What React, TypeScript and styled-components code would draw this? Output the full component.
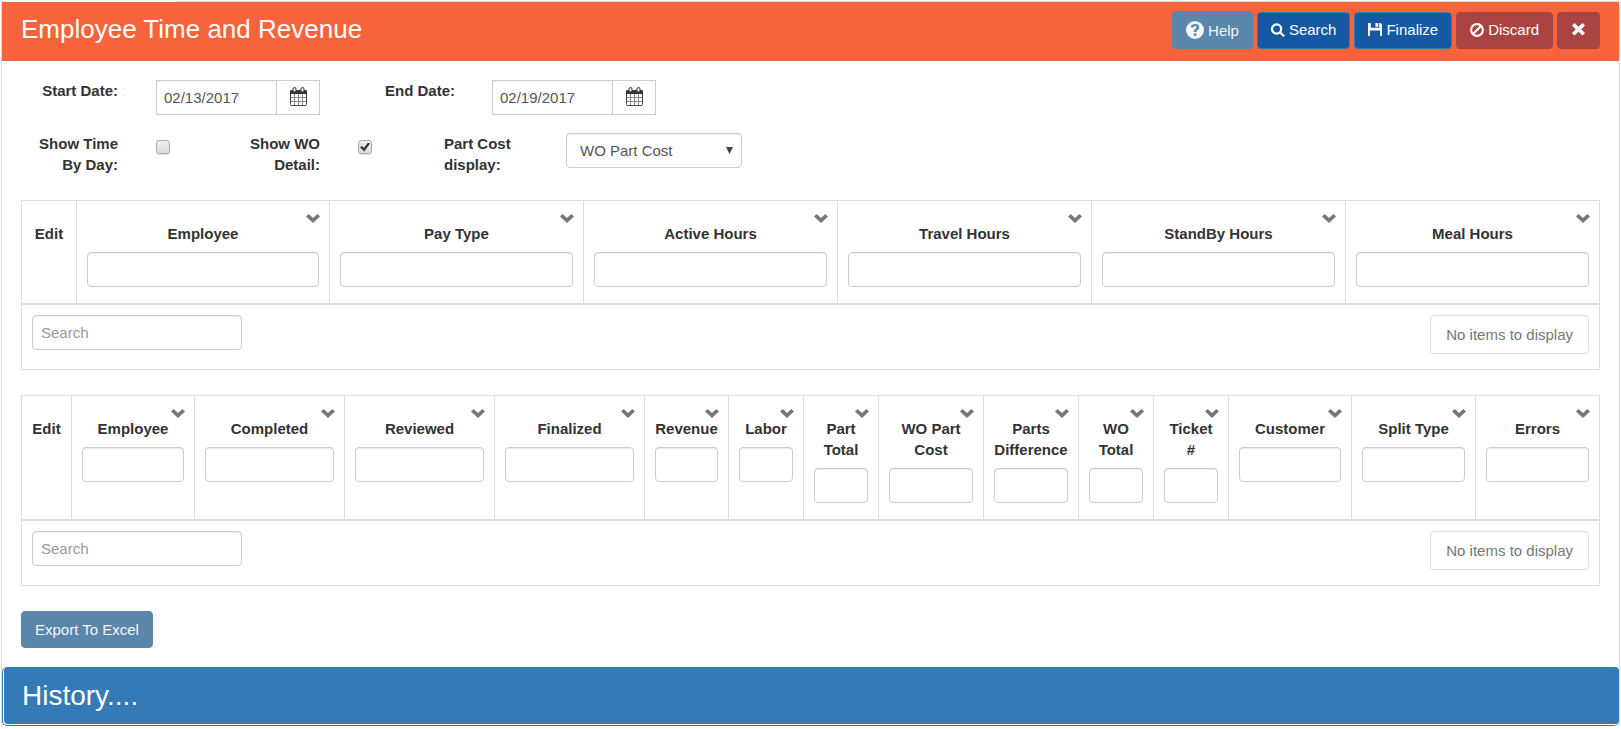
import React from "react";
import styled, { createGlobalStyle, css } from "styled-components";

const GlobalStyle = createGlobalStyle`
  *, *::before, *::after { box-sizing: border-box; }
  body {
    margin: 0;
    background: #fff;
    color: #333;
    font: 15px/21px "Liberation Sans", Arial, sans-serif;
  }
  button, input, select { font: inherit; color: inherit; }
`;

const LINE = "#ddd";

const Page = styled.div`
  padding: 1px 1px 0;
`;

const Panel = styled.main`
  position: relative;
  border: 1px solid ${LINE};
  border-bottom: 0;
  &::before {
    content: "";
    position: absolute;
    top: -1px;
    left: 3px;
    width: 172px;
    height: 1px;
    background: #fff;
  }
`;

const Header = styled.header`
  display: flex;
  justify-content: space-between;
  align-items: flex-start;
  padding: 9px 19px 12px;
  background: #f7633b;
  color: #fff;
`;

const Title = styled.h1`
  margin: 0;
  font-size: 26px;
  line-height: 36px;
  font-weight: 400;
`;

const Toolbar = styled.div`
  display: flex;
  align-items: flex-end;
  gap: 4px;
`;

type Tone = "steel" | "primary" | "danger";

const tones = {
  steel: css`background: #5b86ab; border-color: #5b86ab; color: #f4f6f8;`,
  primary: css`background: #1459a1; border-color: #2a7fae; color: #fff;`,
  danger: css`background: #a94442; border-color: #a94442; color: #fff;`,
};

const Button = styled.button<{ $tone: Tone; $tall?: boolean }>`
  display: inline-flex;
  align-items: center;
  gap: 4px;
  height: ${(p) => (p.$tall ? 38 : 37)}px;
  padding: 0 13px ${(p) => (p.$tone === "steel" ? 0 : 2)}px;
  border: 1px solid;
  border-radius: 4px;
  ${(p) => tones[p.$tone]}
`;

const Icon = styled.svg<{ $size?: number }>`
  display: block;
  flex: none;
  width: ${(p) => p.$size ?? 14}px;
  height: ${(p) => p.$size ?? 14}px;
  fill: currentColor;
`;

const Body = styled.div`
  padding: 19px;
`;

const FormRow = styled.div`
  display: flex;
  align-items: flex-start;
`;

const Field = styled.div<{ $width: number }>`
  display: flex;
  align-items: flex-start;
  width: ${(p) => p.$width}px;
`;

const Label = styled.label<{ $width: number; $gap: number; $left?: boolean }>`
  width: ${(p) => p.$width}px;
  margin-right: ${(p) => p.$gap}px;
  font-weight: 700;
  text-align: ${(p) => (p.$left ? "left" : "right")};
`;

const inputLook = css`
  height: 35px;
  border: 1px solid #ccc;
  background: #fff;
  color: #555;
  box-shadow: inset 0 1px 1px rgba(0, 0, 0, 0.075);
`;

const DateGroup = styled.div`
  display: flex;
`;

const DateInput = styled.input`
  ${inputLook}
  width: 121px;
  padding: 0 7px;
  border-radius: 0;
`;

const DateButton = styled.button`
  display: flex;
  align-items: center;
  justify-content: center;
  width: 44px;
  height: 35px;
  margin-left: -1px;
  padding: 0 0 2px;
  border: 1px solid #ccc;
  background: #fff;
`;

const Options = styled(FormRow)`
  padding-top: 18px;
  margin-bottom: 25px;
`;

const CheckBox = styled.input`
  appearance: none;
  display: grid;
  place-items: center;
  width: 14px;
  height: 14px;
  margin: 7px 0 0;
  border: 1px solid #aaa;
  border-radius: 3px;
  background: linear-gradient(#eee, #dcdcdc);
  box-shadow: 0 1px 1px rgba(0, 0, 0, 0.12);
  &:checked::after {
    content: "";
    width: 10px;
    height: 9px;
    background: #333;
    clip-path: polygon(0 52%, 20% 38%, 38% 62%, 82% 0, 100% 12%, 42% 100%);
  }
`;

const SelectWrap = styled.div`
  position: relative;
`;

const Select = styled.select`
  ${inputLook}
  appearance: none;
  display: block;
  width: 176px;
  padding: 0 13px;
  border-radius: 4px;
`;

const SelectArrow = styled.svg`
  position: absolute;
  right: 9px;
  top: 14px;
  width: 7px;
  height: 7px;
  fill: #444;
  pointer-events: none;
`;

const Grid = styled.section`
  margin-bottom: 25px;
`;

const GridTable = styled.table`
  width: 100%;
  table-layout: fixed;
  border-collapse: collapse;
`;

const HeadCell = styled.th`
  padding: 13px 10px 16px;
  border: 1px solid ${LINE};
  border-bottom: 2px solid ${LINE};
  vertical-align: top;
  font-weight: 700;
  text-align: center;
`;

const MenuButton = styled.button`
  display: block;
  width: 14px;
  height: 9px;
  margin: 0 -1px 0 auto;
  padding: 0;
  border: 0;
  background: none;
  color: #777;
`;

const Chevron = styled.svg`
  display: block;
  width: 14px;
  height: 9px;
  fill: currentColor;
`;

const HeadText = styled.div<{ $plain?: boolean }>`
  margin-top: ${(p) => (p.$plain ? 9 : 0)}px;
  white-space: nowrap;
`;

const FilterInput = styled.input`
  ${inputLook}
  display: block;
  width: 100%;
  margin-top: 8px;
  padding: 0 8px;
  border-radius: 4px;
`;

const GridFooter = styled.div`
  display: flex;
  justify-content: space-between;
  align-items: flex-start;
  padding: 10px 10px 15px;
  border: 1px solid ${LINE};
  border-top: 0;
`;

const SearchInput = styled.input`
  ${inputLook}
  width: 210px;
  padding: 0 8px;
  border-radius: 4px;
  &::placeholder { color: #999; opacity: 1; }
`;

const Empty = styled.div`
  padding: 8px 15px;
  border: 1px solid ${LINE};
  border-radius: 4px;
  color: #777;
`;

const History = styled.section`
  padding: 0 0 1px 1px;
  border: 1px solid #337ab7;
  border-top: 0;
  border-right: 0;
  border-radius: 5px;
`;

const HistoryTitle = styled.h2`
  margin: 0;
  padding: 13px 18px;
  border-radius: 4px;
  background: #337ab7;
  color: #fff;
  font-size: 28px;
  line-height: 31px;
  font-weight: 400;
`;

const CalendarIcon = () => (
  <Icon $size={19} viewBox="0 0 19 19" aria-hidden="true">
    <rect x="1.500" y="3.500" width="16" height="15" rx="1" fill="#fff" stroke="#444" />
    <path d="M1 3.500h17V7H1z" fill="#333" />
    <path d="M5.500 7v11M9.500 7v11M13.500 7v11M2 10.500h15M2 14.500h15" fill="none" stroke="#888" />
    <rect x="4" y="0.500" width="3" height="4.500" rx="1.500" fill="#eee" stroke="#333" />
    <rect x="12" y="0.500" width="3" height="4.500" rx="1.500" fill="#eee" stroke="#333" />
  </Icon>
);

const ChevronIcon = () => (
  <Chevron viewBox="0 0 14 9" aria-hidden="true">
    <path d="M0 2.600 2.700 0 7 4 11.300 0 14 2.600 7 9z" />
  </Chevron>
);

type Column = { name: string; lines: string[]; width: number; plain?: boolean };

const col = (name: string, width: number, lines = [name]): Column => ({ name, width, lines });
const edit = (width: number): Column => ({ name: "Edit", width, lines: ["Edit"], plain: true });

const hourColumns: Column[] = [
  edit(55),
  col("Employee", 253),
  col("Pay Type", 254),
  col("Active Hours", 254),
  col("Travel Hours", 254),
  col("StandBy Hours", 254),
  col("Meal Hours", 254),
];

const orderColumns: Column[] = [
  edit(50),
  col("Employee", 123),
  col("Completed", 150),
  col("Reviewed", 150),
  col("Finalized", 150),
  col("Revenue", 84),
  col("Labor", 75),
  col("Part Total", 75, ["Part", "Total"]),
  col("WO Part Cost", 105, ["WO Part", "Cost"]),
  col("Parts Difference", 95, ["Parts", "Difference"]),
  col("WO Total", 75, ["WO", "Total"]),
  col("Ticket #", 75, ["Ticket", "#"]),
  col("Customer", 123),
  col("Split Type", 124),
  col("Errors", 124),
];

const DataGrid = ({ title, columns }: { title: string; columns: Column[] }) => (
  <Grid aria-label={title}>
    <GridTable>
      <colgroup>
        {columns.map((c) => (
          <col key={c.name} width={c.width} />
        ))}
      </colgroup>
      <thead>
        <tr>
          {columns.map((c) => (
            <HeadCell key={c.name} scope="col">
              {!c.plain && (
                <MenuButton type="button" aria-label={`${c.name} menu`}>
                  <ChevronIcon />
                </MenuButton>
              )}
              {c.lines.map((line, i) => (
                <HeadText key={line} $plain={c.plain && i === 0}>
                  {line}
                </HeadText>
              ))}
              {!c.plain && <FilterInput type="text" aria-label={`Filter ${c.name}`} />}
            </HeadCell>
          ))}
        </tr>
      </thead>
    </GridTable>
    <GridFooter>
      <SearchInput type="text" placeholder="Search" aria-label={`Search ${title}`} />
      <Empty>No items to display</Empty>
    </GridFooter>
  </Grid>
);

const App = () => (
  <Page>
    <GlobalStyle />
    <Panel>
      <Header>
        <Title>Employee Time and Revenue</Title>
        <Toolbar>
          <Button type="button" $tone="steel" $tall>
            <Icon $size={18} viewBox="0 0 18 18" aria-hidden="true">
              <path
                fillRule="evenodd"
                d="M9 0a9 9 0 1 1 0 18A9 9 0 0 1 9 0zM7.700 12.300v2.500h2.700v-2.500zM4.800 6.500h2.600C7.500 5.500 8 5 9 5s1.500.5 1.500 1.300c0 .9-.6 1.200-1.500 1.900S7.700 9.600 7.700 11h2.600c0-.9.500-1.200 1.400-1.900s1.600-1.500 1.600-2.900C13.300 4.200 11.500 3 9.100 3 6.500 3 4.900 4.300 4.800 6.500z"
              />
            </Icon>
            Help
          </Button>
          <Button type="button" $tone="primary">
            <Icon viewBox="0 0 15 15" aria-hidden="true">
              <circle cx="6" cy="6.500" r="4.900" fill="none" stroke="currentColor" strokeWidth="2.400" />
              <path d="m9 11 1.700-1.700 4.300 4-1.800 1.700z" />
            </Icon>
            Search
          </Button>
          <Button type="button" $tone="primary">
            <Icon viewBox="0 0 15 15" aria-hidden="true">
              <path fillRule="evenodd" d="M0 0h3v5h9V0h1.500L15 1.500V14h-2V8H2v6H0zM8 0h3v4H8z" />
            </Icon>
            Finalize
          </Button>
          <Button type="button" $tone="danger">
            <Icon viewBox="0 0 15 15" aria-hidden="true">
              <circle cx="7.500" cy="7.500" r="6.300" fill="none" stroke="currentColor" strokeWidth="2.200" />
              <path d="m2.600 10.800 8.200-8.200 1.600 1.600-8.200 8.200z" />
            </Icon>
            Discard
          </Button>
          <Button type="button" $tone="danger" aria-label="Close">
            <Icon $size={15} viewBox="0 0 15 15" aria-hidden="true">
              <path d="M3.500 1 7.500 4.800 11.500 1 14 3.500 10.200 7.200 14 11l-2.500 2.500-4-3.800-4 3.800L1 11l3.800-3.800L1 3.500z" />
            </Icon>
          </Button>
        </Toolbar>
      </Header>

      <Body>
        <FormRow>
          <Field $width={336}>
            <Label htmlFor="start" $width={97} $gap={38}>Start Date:</Label>
            <DateGroup>
              <DateInput id="start" type="text" defaultValue="02/13/2017" />
              <DateButton type="button" aria-label="Choose start date"><CalendarIcon /></DateButton>
            </DateGroup>
          </Field>
          <Field $width={320}>
            <Label htmlFor="end" $width={98} $gap={37}>End Date:</Label>
            <DateGroup>
              <DateInput id="end" type="text" defaultValue="02/19/2017" />
              <DateButton type="button" aria-label="Choose end date"><CalendarIcon /></DateButton>
            </DateGroup>
          </Field>
        </FormRow>
        <Options>
          <Field $width={202}>
            <Label htmlFor="byday" $width={97} $gap={38}>Show Time<br />By Day:</Label>
            <CheckBox id="byday" type="checkbox" />
          </Field>
          <Field $width={221}>
            <Label htmlFor="detail" $width={97} $gap={38}>Show WO<br />Detail:</Label>
            <CheckBox id="detail" type="checkbox" defaultChecked />
          </Field>
          <Field $width={300}>
            <Label htmlFor="cost" $width={85} $gap={37} $left>Part Cost<br />display:</Label>
            <SelectWrap>
              <Select id="cost" defaultValue="wo">
                <option value="wo">WO Part Cost</option>
              </Select>
              <SelectArrow viewBox="0 0 7 7" aria-hidden="true"><path d="M0 0h7L3.500 7z" /></SelectArrow>
            </SelectWrap>
          </Field>
        </Options>

        <DataGrid title="employee hours" columns={hourColumns} />
        <DataGrid title="work orders" columns={orderColumns} />

        <Button type="button" $tone="steel">Export To Excel</Button>
      </Body>

      <History>
        <HistoryTitle>History....</HistoryTitle>
      </History>
    </Panel>
  </Page>
);

export default App;
